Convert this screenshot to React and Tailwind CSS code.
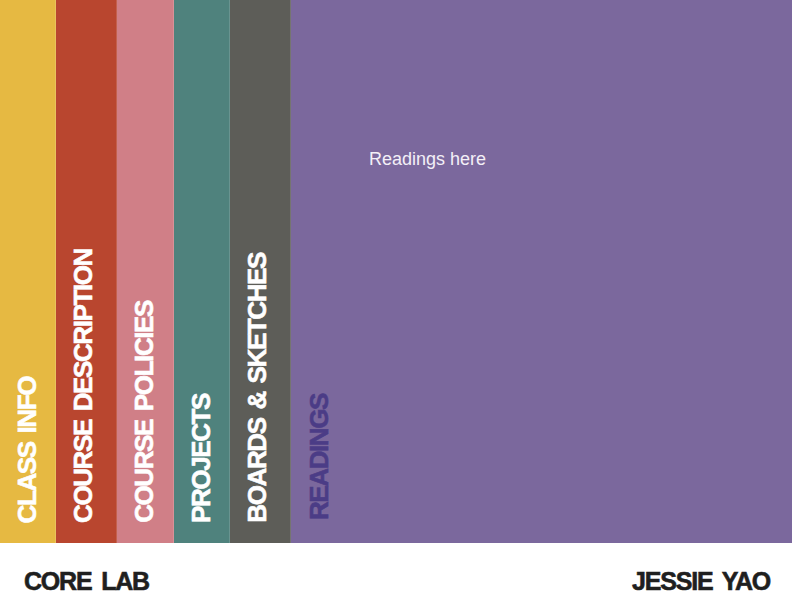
import React from 'react';

const tabs = [
  { label: 'CLASS INFO', bg: 'bg-[#e6b942]', w: 'w-[56px]' },
  { label: 'COURSE DESCRIPTION', bg: 'bg-[#b9462f]', w: 'w-[61px]' },
  { label: 'COURSE POLICIES', bg: 'bg-[#d07f87]', w: 'w-[57px]' },
  { label: 'PROJECTS', bg: 'bg-[#4f827d]', w: 'w-[56px]' },
  { label: 'BOARDS & SKETCHES', bg: 'bg-[#5d5d58]', w: 'w-[61px]' },
];

const App = () => {
  return (
    <div className="w-[792px] h-[612px] flex flex-col bg-white overflow-hidden font-['Liberation_Sans',Arial,sans-serif]">
      <div className="h-[543px] flex">
        {tabs.map((t) => (
          <div
            key={t.label}
            className={`${t.w} ${t.bg} h-full shrink-0 flex flex-col justify-end items-start pl-[14px] pb-[20px] border-r border-white/15`}
          >
            <span className="[writing-mode:vertical-rl] rotate-180 text-white font-bold text-[26px] leading-none tracking-[-1.4px] [word-spacing:3px] whitespace-nowrap [-webkit-text-stroke:0.6px_currentColor]">
              {t.label}
            </span>
          </div>
        ))}

        {/* readings panel */}
        <div className="flex-1 h-full bg-[#7b689d] flex">
          <div className="h-full flex flex-col justify-end pl-[15px] pb-[23px]">
            <span className="[writing-mode:vertical-rl] rotate-180 text-[#4b3c86] font-bold text-[26px] leading-none tracking-[-1.4px] whitespace-nowrap [-webkit-text-stroke:0.6px_currentColor]">
              READINGS
            </span>
          </div>
          <div className="pt-[147px] pl-[37px]">
            <p className="text-[#f3eff7] text-[18px] leading-[24px]">Readings here</p>
          </div>
        </div>
      </div>

      <div className="flex-1 flex items-center justify-between pl-[24px] pr-[22px] pt-[8px]">
        <span className="text-[#1f1f1f] font-bold text-[25px] tracking-[-1.2px] [word-spacing:4px] leading-none [-webkit-text-stroke:0.6px_currentColor]">CORE LAB</span>
        <span className="text-[#1f1f1f] font-bold text-[25px] tracking-[-1.2px] [word-spacing:4px] leading-none [-webkit-text-stroke:0.6px_currentColor]">JESSIE YAO</span>
      </div>
    </div>
  );
};

export default App;
